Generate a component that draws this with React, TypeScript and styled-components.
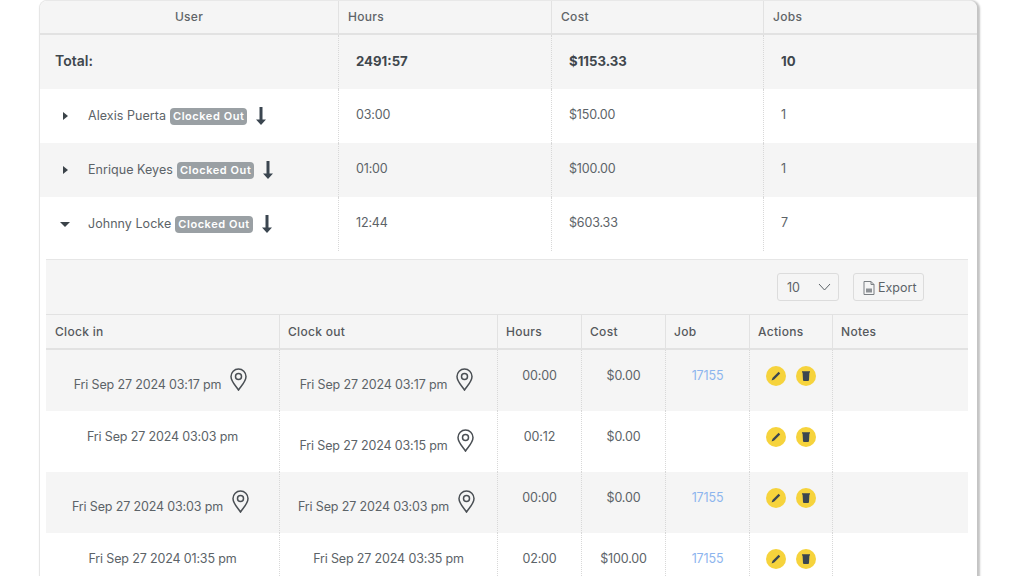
import React from 'react';
import styled, { createGlobalStyle } from 'styled-components';

const GlobalStyle = createGlobalStyle`
  html, body {
    margin: 0;
    height: 576px;
    overflow: hidden;
    background: #fff;
  }
  body {
    font-family: Inter, "Noto Sans", "Liberation Sans", sans-serif;
    color: #5c6368;
  }
`;

const Page = styled.div`
  padding-left: 39px;
  width: 938px;
`;

const Card = styled.div`
  width: 938px;
  box-sizing: border-box;
  background: #fff;
  border-top: 1px solid #e8e8e8;
  border-left: 1px solid #e6e6e6;
  border-top-left-radius: 8px;
  border-top-right-radius: 8px;
  box-shadow: 2px 1px 2px 1px #c4c4c4;
  overflow: hidden;
  padding-bottom: 8px;
`;

const groupColumns = '298px 213px 212px 214px';
const detailColumns = '233px 218px 84px 84px 84px 83px 136px';

const Row = styled.div<{ $columns: string; $height: number; $shade?: boolean }>`
  display: grid;
  grid-template-columns: ${(p) => p.$columns};
  height: ${(p) => p.$height}px;
  background: ${(p) => (p.$shade ? '#f5f5f5' : '#fff')};
`;

const HeaderRow = styled(Row)`
  box-sizing: border-box;
  background: #f5f5f5;
  border-bottom: 2px solid #e2e2e2;
`;

const HeaderCell = styled.div<{ $center?: boolean }>`
  padding: 0 9px 2px;
  display: flex;
  align-items: center;
  justify-content: ${(p) => (p.$center ? 'center' : 'flex-start')};
  font-size: 12px;
  font-weight: 500;
  letter-spacing: 0.3px;
  color: #5f6468;
  border-left: 1px solid #e2e2e2;
  &:first-child {
    border-left: 0;
  }
`;

const DetailHeaderCell = styled(HeaderCell)`
  padding: 0 8px;
  color: #55595d;
  &:first-child {
    padding-left: 9px;
  }
`;

const Cell = styled.div`
  box-sizing: border-box;
  padding: 17px 17px 0;
  font-size: 12.5px;
  letter-spacing: -0.15px;
  line-height: 18px;
  border-left: 1px dotted #d8d8d8;
  &:first-child {
    border-left: 0;
  }
`;

const TotalCell = styled(Cell)`
  font-size: 13.2px;
  letter-spacing: 0;
  font-weight: 700;
  color: #3f474d;
`;

const TotalLabel = styled(TotalCell)`
  padding-left: 15px;
  font-size: 14px;
  font-weight: 600;
`;

const UserCell = styled(Cell)`
  display: flex;
  align-items: center;
  align-self: start;
  height: 36px;
  padding: 18px 0 0 20px;
  letter-spacing: 0;
  white-space: nowrap;
`;

const Toggle = styled.span<{ $open?: boolean }>`
  width: 28px;
  display: flex;
  &::before {
    content: '';
    display: block;
    margin-left: ${(p) => (p.$open ? '0' : '3px')};
    border-style: solid;
    border-color: transparent;
    border-width: ${(p) => (p.$open ? '5px 5px 0' : '4.5px 0 4.5px 5px')};
    border-top-color: ${(p) => (p.$open ? '#3b4349' : 'transparent')};
    border-left-color: ${(p) => (p.$open ? 'transparent' : '#3b4349')};
  }
`;

const Name = styled.span`
  margin-right: 4px;
  letter-spacing: 0.05px;
`;

const Badge = styled.span`
  padding: 0 3px;
  height: 17px;
  line-height: 17px;
  border-radius: 4px;
  background: #9aa0a4;
  color: #fff;
  font-size: 11px;
  font-weight: 600;
  letter-spacing: 0.55px;
  margin-right: 9px;
`;

const Panel = styled.div`
  margin: 8px 9px 0 6px;
  background: #f5f5f5;
  border-top: 1px solid #e6e6e6;
`;

const Toolbar = styled.div`
  height: 54px;
  box-sizing: border-box;
  padding: 13px 44px 0 0;
  display: flex;
  justify-content: flex-end;
  gap: 14px;
`;

const Control = styled.div`
  height: 28px;
  box-sizing: border-box;
  display: flex;
  align-items: center;
  border: 1px solid #dcdcdc;
  border-radius: 3px;
  font-size: 12.5px;
  color: #5c6368;
`;

const PageSize = styled(Control)`
  width: 62px;
  padding: 0 7px 0 9px;
  justify-content: space-between;
`;

const ExportButton = styled(Control)`
  width: 71px;
  padding: 1px 0 0 9px;
  gap: 3px;
`;

const DetailTable = styled.div`
  border-top: 1px solid #e2e2e2;
`;

const DateText = styled.div`
  text-align: center;
  white-space: nowrap;
`;

const PlainDateCell = styled(Cell)`
  padding: 17px 0 0;
`;

const PinnedDateCell = styled(Cell)`
  padding: 18px 4px 0 0;
  display: flex;
  justify-content: center;
  gap: 9px;
  ${DateText} {
    margin-top: 8px;
  }
`;

const CenterCell = styled(Cell)`
  padding: 17px 0 0;
  text-align: center;
`;

const JobLink = styled.a`
  color: #8db5ee;
`;

const ActionsCell = styled(Cell)`
  padding: 16px 0 0;
  display: flex;
  justify-content: center;
  align-items: flex-start;
  gap: 10px;
`;

const ActionButton = styled.span`
  width: 20px;
  height: 20px;
  border-radius: 50%;
  background: #f6d33c;
  display: flex;
  align-items: center;
  justify-content: center;
`;

const Pin = () => (
  <svg width="17" height="23" viewBox="0 0 17 23" fill="none" stroke="#4a4f54" strokeWidth="1.5">
    <path d="M8.5 22C5.5 17.5 1 13.5 1 8.5a7.5 7.5 0 0 1 15 0C16 13.5 11.5 17.5 8.5 22Z" />
    <circle cx="8.5" cy="8.5" r="3" />
  </svg>
);

const DownArrow = () => (
  <svg width="10" height="18" viewBox="0 0 10 18" fill="#3b4650">
    <path d="M3.5 0h3v12.5H10L5 18 0 12.5h3.5Z" />
  </svg>
);

const Chevron = () => (
  <svg width="13" height="8" viewBox="0 0 13 8" fill="none" stroke="#5c6368" strokeWidth="1">
    <path d="M1 1l5.5 6L12 1" />
  </svg>
);

const FileIcon = () => (
  <svg width="12" height="14" viewBox="0 0 12 14" fill="#f5f5f5" stroke="#7a7f83" strokeWidth="1">
    <path d="M1 .5h7l3 3v10H1Z" />
    <path d="M8 .5v3h3" fill="none" />
    <path d="M3 7.5h6v4H3Z" fill="#8d9195" stroke="none" />
  </svg>
);

const PencilIcon = () => (
  <svg width="10" height="10" viewBox="0 0 10 10" fill="#3b4650">
    <path d="M7.6 .8l1.6 1.6-6 6L.6 9.4l1-2.6Z" />
  </svg>
);

const TrashIcon = () => (
  <svg width="8" height="10" viewBox="0 0 8 10" fill="#3b4650">
    <path d="M0 .2h8v1.4H7.4L7 9a1 1 0 0 1-1 1H2a1 1 0 0 1-1-1L.6 1.6H0Z" />
  </svg>
);

type GroupEntry = { name: string; hours: string; cost: string; jobs: string; open?: boolean };

const groups: GroupEntry[] = [
  { name: 'Alexis Puerta', hours: '03:00', cost: '$150.00', jobs: '1' },
  { name: 'Enrique Keyes', hours: '01:00', cost: '$100.00', jobs: '1' },
  { name: 'Johnny Locke', hours: '12:44', cost: '$603.33', jobs: '7', open: true },
];

type Stamp = { text: string; pin: boolean };
type DetailEntry = { clockIn: Stamp; clockOut: Stamp; hours: string; cost: string; job: string };

const details: DetailEntry[] = [
  {
    clockIn: { text: 'Fri Sep 27 2024 03:17 pm', pin: true },
    clockOut: { text: 'Fri Sep 27 2024 03:17 pm', pin: true },
    hours: '00:00',
    cost: '$0.00',
    job: '17155',
  },
  {
    clockIn: { text: 'Fri Sep 27 2024 03:03 pm', pin: false },
    clockOut: { text: 'Fri Sep 27 2024 03:15 pm', pin: true },
    hours: '00:12',
    cost: '$0.00',
    job: '',
  },
  {
    clockIn: { text: 'Fri Sep 27 2024 03:03 pm', pin: true },
    clockOut: { text: 'Fri Sep 27 2024 03:03 pm', pin: true },
    hours: '00:00',
    cost: '$0.00',
    job: '17155',
  },
  {
    clockIn: { text: 'Fri Sep 27 2024 01:35 pm', pin: false },
    clockOut: { text: 'Fri Sep 27 2024 03:35 pm', pin: false },
    hours: '02:00',
    cost: '$100.00',
    job: '17155',
  },
];

const DateCell = ({ text, pin }: Stamp) =>
  pin ? (
    <PinnedDateCell>
      <DateText>{text}</DateText>
      <Pin />
    </PinnedDateCell>
  ) : (
    <PlainDateCell>
      <DateText>{text}</DateText>
    </PlainDateCell>
  );

export default function App() {
  return (
    <Page>
      <GlobalStyle />
      <Card>
        <HeaderRow $columns={groupColumns} $height={34}>
          <HeaderCell $center>User</HeaderCell>
          <HeaderCell>Hours</HeaderCell>
          <HeaderCell>Cost</HeaderCell>
          <HeaderCell>Jobs</HeaderCell>
        </HeaderRow>
        <Row $columns={groupColumns} $height={54} $shade>
          <TotalLabel>Total:</TotalLabel>
          <TotalCell>2491:57</TotalCell>
          <TotalCell>$1153.33</TotalCell>
          <TotalCell>10</TotalCell>
        </Row>
        {groups.map((g, i) => (
          <Row key={g.name} $columns={groupColumns} $height={54} $shade={i % 2 === 1}>
            <UserCell>
              <Toggle $open={g.open} />
              <Name>{g.name}</Name>
              <Badge>Clocked Out</Badge>
              <DownArrow />
            </UserCell>
            <Cell>{g.hours}</Cell>
            <Cell>{g.cost}</Cell>
            <Cell>{g.jobs}</Cell>
          </Row>
        ))}
        <Panel>
          <Toolbar>
            <PageSize>
              10
              <Chevron />
            </PageSize>
            <ExportButton>
              <FileIcon />
              Export
            </ExportButton>
          </Toolbar>
          <DetailTable>
            <HeaderRow $columns={detailColumns} $height={35}>
              <DetailHeaderCell>Clock in</DetailHeaderCell>
              <DetailHeaderCell>Clock out</DetailHeaderCell>
              <DetailHeaderCell>Hours</DetailHeaderCell>
              <DetailHeaderCell>Cost</DetailHeaderCell>
              <DetailHeaderCell>Job</DetailHeaderCell>
              <DetailHeaderCell>Actions</DetailHeaderCell>
              <DetailHeaderCell>Notes</DetailHeaderCell>
            </HeaderRow>
            {details.map((d, i) => (
              <Row key={i} $columns={detailColumns} $height={61} $shade={i % 2 === 0}>
                <DateCell {...d.clockIn} />
                <DateCell {...d.clockOut} />
                <CenterCell>{d.hours}</CenterCell>
                <CenterCell>{d.cost}</CenterCell>
                <CenterCell>
                  <JobLink>{d.job}</JobLink>
                </CenterCell>
                <ActionsCell>
                  <ActionButton>
                    <PencilIcon />
                  </ActionButton>
                  <ActionButton>
                    <TrashIcon />
                  </ActionButton>
                </ActionsCell>
                <Cell />
              </Row>
            ))}
          </DetailTable>
        </Panel>
      </Card>
    </Page>
  );
}
